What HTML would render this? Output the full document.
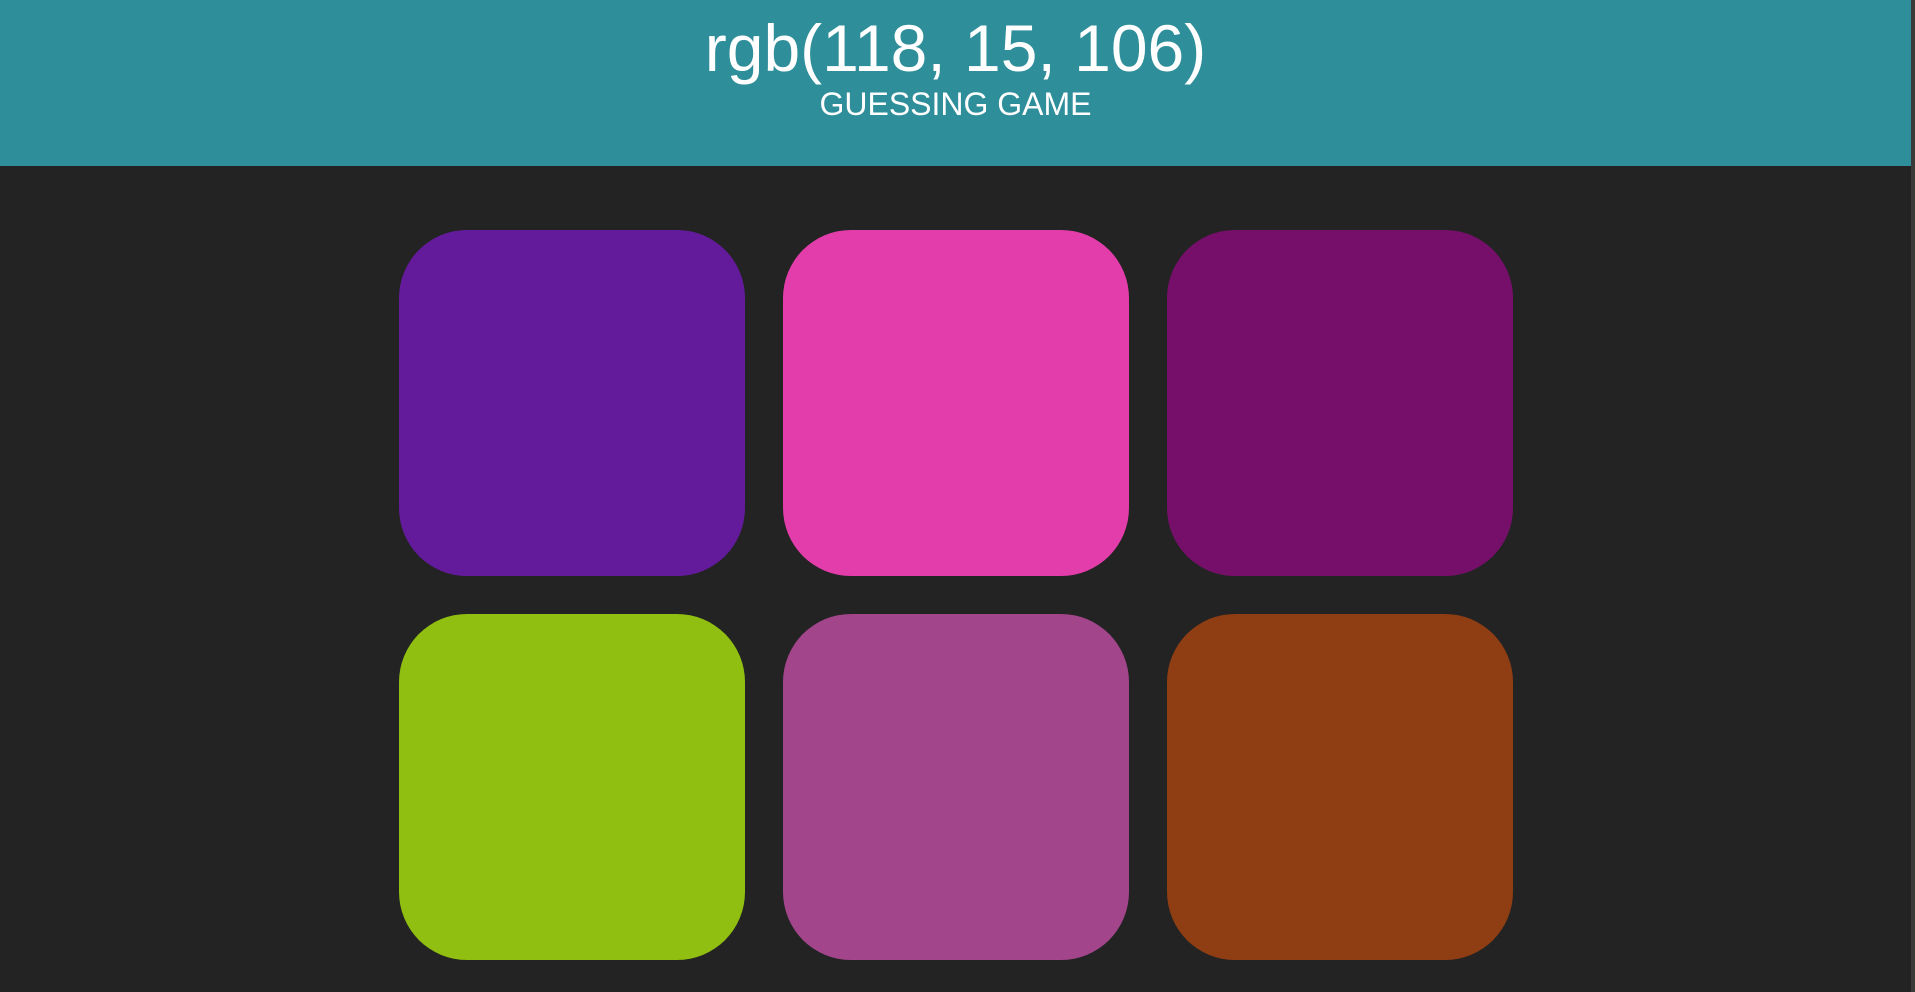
<!DOCTYPE html>
<html><head><style>
html,body{margin:0;padding:0;width:1915px;height:992px;overflow:hidden;background:#232323;font-family:"Liberation Sans",sans-serif;}
.h{position:absolute;left:0;top:0;width:1911px;height:166px;background:#2e8e9a;color:#fff;text-align:center;}
.t{position:absolute;top:8px;width:100%;font-size:66px;line-height:80px;}
.s{position:absolute;top:86px;width:100%;font-size:32px;line-height:36px;}
.sq{position:absolute;width:346px;height:346px;border-radius:68px;}
.sb{position:absolute;left:1911px;top:0;width:4px;height:992px;background:#3a3a3a;}
</style></head><body>
<div class="h"><div class="t">rgb(118, 15, 106)</div><div class="s">GUESSING GAME</div></div>
<div class="sb"></div>
<div class="sq" style="left:399px;top:230px;background:#631b9c"></div>
<div class="sq" style="left:783px;top:230px;background:#e33dab"></div>
<div class="sq" style="left:1167px;top:230px;background:#760f6a"></div>
<div class="sq" style="left:399px;top:614px;background:#90bf11"></div>
<div class="sq" style="left:783px;top:614px;background:#a2458a"></div>
<div class="sq" style="left:1167px;top:614px;background:#8f3d12"></div>
</body></html>
